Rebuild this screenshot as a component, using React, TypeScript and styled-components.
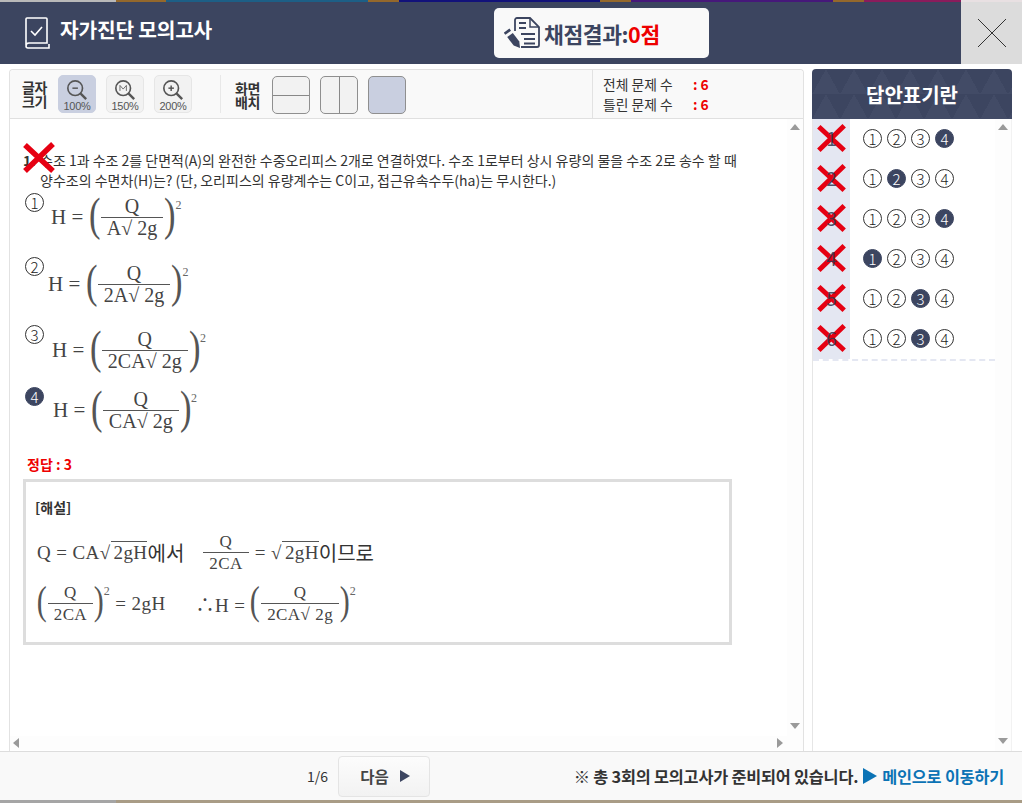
import React from "react"
import styled, { createGlobalStyle } from "styled-components"

const navy = "#3c4560"
const kr = `"Noto Sans CJK KR", "Noto Sans", sans-serif`
const serif = `"Liberation Serif", "Noto Sans CJK KR", serif`

const GlobalStyle = createGlobalStyle`
    html, body {
        margin: 0;
        padding: 0;
        background: #fff;
        font-family: ${kr};
        overflow: hidden;
    }
    * {
        box-sizing: border-box;
    }
`

const Page = styled.div`
    width: 1022px;
    height: 803px;
    display: flex;
    flex-direction: column;
    overflow: hidden;
`

const TopStrip = styled.div`
    height: 2px;
    flex: none;
    background: linear-gradient(
        90deg,
        #b9b9b9 0 116px,
        #94682c 116px 166px,
        #1d5f86 166px 368px,
        #94682c 368px 399px,
        #12127a 399px 600px,
        #94682c 600px 631px,
        #46187a 631px 833px,
        #94682c 833px 864px,
        #8a1c5c 864px 961px,
        #e8e0e2 961px 1022px
    );
`

const Header = styled.header`
    height: 62px;
    flex: none;
    background: ${navy};
    display: flex;
    align-items: stretch;
    padding-left: 24px;
`

const TitleWrap = styled.div`
    width: 470px;
    display: flex;
    align-items: flex-start;
    gap: 10px;
    padding-top: 14px;
`

const Title = styled.h1`
    margin: -1px 0 0;
    color: #fff;
    font-size: 20.3px;
    line-height: 28px;
    font-weight: 700;
    letter-spacing: -0.2px;
`

const ScoreBox = styled.div`
    width: 215px;
    height: 50px;
    margin-top: 6px;
    background: #f9f9f9;
    border-radius: 5px;
    display: flex;
    align-items: center;
    padding-left: 10px;
    gap: 4px;
`

const ScoreLabel = styled.span`
    color: ${navy};
    font-size: 21.5px;
    font-weight: 700;
    letter-spacing: -0.4px;
`

const ScoreValue = styled.span`
    color: #ee0000;
`

const CloseButton = styled.button`
    margin-left: auto;
    width: 61px;
    border: 0;
    padding: 0;
    background: #dcdcdc;
    display: flex;
    align-items: center;
    justify-content: center;
`

const Body = styled.main`
    flex: 1;
    display: flex;
    gap: 8px;
    padding: 5px 10px 0 9px;
    min-height: 0;
`

const LeftPanel = styled.section`
    width: 795px;
    display: flex;
    flex-direction: column;
    border: 1px solid #e2e2e2;
    border-bottom: 0;
    border-radius: 4px 4px 0 0;
`

const Toolbar = styled.div`
    height: 49px;
    flex: none;
    background: #f9f9f9;
    border-bottom: 1px solid #e0e0e0;
    display: flex;
    border-radius: 4px 4px 0 0;
`

const ToolLabel = styled.div`
    font-size: 14px;
    line-height: 14px;
    font-weight: 700;
    color: #333;
    width: 27px;
    text-align: center;
    letter-spacing: -0.3px;
`

const FontGroup = styled.div`
    display: flex;
    align-items: center;
    width: 211px;
    padding-left: 11px;
    border-right: 1px solid #e8e8e8;
    height: 38px;
    margin-top: 5px;
`

const ZoomButtons = styled.div`
    display: flex;
    gap: 10px;
    margin-left: 10px;
`

const ZoomButton = styled.div<{ $active?: boolean }>`
    width: 38px;
    height: 38px;
    border-radius: 5px;
    border: 1px solid ${(p) => (p.$active ? "#c9cfe0" : "#e6e6e6")};
    background: ${(p) => (p.$active ? "#c9cfe0" : "#f2f2f2")};
    display: flex;
    flex-direction: column;
    align-items: center;
    padding-top: 3px;
    font-size: 11px;
    line-height: 11px;
    letter-spacing: -0.3px;
    color: #555;
    font-family: "Liberation Sans", sans-serif;
`

const LayoutGroup = styled.div`
    display: flex;
    align-items: center;
    gap: 10px;
    padding-left: 13px;
    flex: 1;
    margin-top: 1px;

    ${ToolLabel} {
        margin-right: 1px;
    }
`

const LayoutButton = styled.div<{ $active?: boolean; $split?: "h" | "v" }>`
    width: 38px;
    height: 38px;
    border-radius: 5px;
    border: 1px solid #8f8f8f;
    background: ${(p) =>
        p.$active
            ? "#c9cfe0"
            : p.$split === "h"
              ? "linear-gradient(180deg, #f2f2f2 18px, #888 18px 19px, #f2f2f2 19px)"
              : "linear-gradient(90deg, #f2f2f2 18px, #888 18px 19px, #f2f2f2 19px)"};
`

const CountBox = styled.div`
    width: 211px;
    border-left: 1px solid #e2e2e2;
    padding: 4px 0 0 10px;
    font-size: 13.8px;
    line-height: 20px;
    color: #333;
`

const CountRow = styled.div`
    display: flex;
`

const CountName = styled.span`
    width: 90px;
`

const CountValue = styled.span`
    color: #ee0000;
    font-weight: 700;
`

const ContentRow = styled.div`
    flex: 1;
    display: flex;
    min-height: 0;
`

const Content = styled.div`
    flex: 1;
    padding: 31px 0 0 13px;
    min-width: 0;
`

const VScroll = styled.div`
    width: 16px;
    background: #fdfdfd;
    display: flex;
    flex-direction: column;
    justify-content: space-between;
    align-items: center;
    padding: 5px 0 7px;
`

const HScroll = styled.div`
    height: 14px;
    flex: none;
    margin-bottom: 1px;
    background: #fdfdfd;
    display: flex;
    justify-content: space-between;
    align-items: center;
    padding: 0 20px 0 3px;
`

const Arrow = styled.i<{ $dir: "up" | "down" | "left" | "right"; $color?: string; $w?: number; $h?: number }>`
    display: block;
    width: 0;
    height: 0;
    border-style: solid;
    border-color: transparent;
    ${(p) => {
        const c = p.$color || "#9a9a9a"
        const w = p.$w || 6
        const h = p.$h || 5
        if (p.$dir === "up") return `border-width: 0 5px 6px; border-bottom-color: ${c};`
        if (p.$dir === "down") return `border-width: 6px 5px 0; border-top-color: ${c};`
        if (p.$dir === "left") return `border-width: 5px 6px 5px 0; border-right-color: ${c};`
        return `border-width: ${h}px 0 ${h}px ${w}px; border-left-color: ${c};`
    }}
`

const Question = styled.div`
    position: relative;
    font-size: 14px;
    line-height: 20px;
    color: #333;
    padding-left: 17px;
    white-space: nowrap;
`

const QuestionNo = styled.b`
    position: absolute;
    left: 0;
    top: 0;
`

const QuestionMark = styled.span`
    position: absolute;
    left: 0;
    top: -8px;
`

const Options = styled.div`
    display: flex;
    flex-direction: column;
    margin-top: 3px;
`

const Option = styled.div<{ $h: number }>`
    height: ${(p) => p.$h}px;
    display: flex;
    align-items: flex-start;
    padding-left: 1px;
`

const OptionCircle = styled.span<{ $filled?: boolean }>`
    width: 19px;
    height: 19px;
    margin-left: 1px;
    margin-right: 7px;
    flex: none;
    border-radius: 50%;
    border: 1px solid ${(p) => (p.$filled ? navy : "#333")};
    background: ${(p) => (p.$filled ? navy : "transparent")};
    color: ${(p) => (p.$filled ? "#fff" : "#222")};
    font-size: 15px;
    font-weight: 300;
    line-height: 17px;
    text-align: center;
`

const Formula = styled.div<{ $top: number; $left: number }>`
    display: flex;
    align-items: center;
    font-family: ${serif};
    color: #444;
    font-size: 21px;
    white-space: pre;
    margin-top: ${(p) => p.$top}px;
    margin-left: ${(p) => p.$left}px;
`

const Frac = styled.span<{ $size?: number }>`
    display: inline-flex;
    flex-direction: column;
    align-items: center;
    font-size: ${(p) => p.$size || 20}px;
    line-height: 1;
    margin: 0 1px;
`

const Num = styled.span`
    padding: 0 4px 0;
    line-height: 21px;
`

const Den = styled.span`
    border-top: 1.5px solid #555;
    padding: 0 6px;
    line-height: 21px;
    white-space: nowrap;
`

const Sqrt = styled.span<{ $over?: boolean }>`
    ${(p) => (p.$over ? "border-top: 1px solid #555; padding-left: 3px;" : "padding-left: 5px;")}
`

const Sup = styled.sup`
    font-size: 12px;
    line-height: 1;
    align-self: flex-start;
    margin-top: 3px;
    color: #666;
`

const Paren = styled.span<{ $size: number }>`
    font-size: ${(p) => p.$size}px;
    line-height: 1;
    font-weight: 400;
    transform: scaleX(0.75);
    font-family: "Liberation Serif", serif;
    margin: -6px -2px 0;
    color: #555;
`

const Answer = styled.div`
    font-size: 14px;
    line-height: 18px;
    font-weight: 700;
    color: #ee0000;
    margin: 0 0 0 4px;
`

const ExplainBox = styled.div`
    width: 709px;
    height: 166px;
    margin: 6px 0 0 0;
    border: 3px solid #dddddd;
    padding: 16px 0 0 9px;
    color: #333;
`

const ExplainTitle = styled.div`
    font-size: 14px;
    line-height: 18px;
    font-weight: 700;
`

const ExplainLine = styled.div<{ $top: number }>`
    display: flex;
    align-items: center;
    font-family: ${serif};
    font-size: 19px;
    letter-spacing: 0.4px;
    color: #444;
    white-space: pre;
    margin: ${(p) => p.$top}px 0 0 2px;
`

const ExplainKo = styled.span`
    font-family: ${kr};
    font-weight: 400;
    font-size: 20px;
    letter-spacing: 0;
    color: #333;
`

const Spacer = styled.span<{ $w: number }>`
    display: inline-block;
    width: ${(p) => p.$w}px;
`

const RightPanel = styled.aside`
    width: 200px;
    display: flex;
    flex-direction: column;
`

const AnswerHead = styled.div`
    height: 50px;
    flex: none;
    border-radius: 4px 4px 0 0;
    color: #fff;
    font-size: 20px;
    font-weight: 700;
    display: flex;
    align-items: center;
    justify-content: center;
    background-color: ${navy};
    background-image: conic-gradient(from 151deg at 50% 0, #424b66 58deg, transparent 0);
    background-size: 28px 25px;
`

const AnswerBody = styled.div`
    flex: 1;
    display: flex;
    border-left: 1px solid #e6e6e6;
    border-right: 1px solid #f2f2f2;
    min-height: 0;
`

const AnswerList = styled.div`
    flex: 1;
    align-self: flex-start;
    border-bottom: 2px dashed #e4e7f2;
`

const AnswerRow = styled.div`
    height: 40px;
    display: flex;
    align-items: center;
`

const AnswerNo = styled.div`
    width: 37px;
    height: 40px;
    background: #e4e7f2;
    position: relative;
    display: flex;
    align-items: center;
    justify-content: center;
    margin-right: 13px;
`

const RowNumber = styled.span`
    position: relative;
    z-index: 1;
    font-size: 19px;
    line-height: 28px;
    margin-top: -3px;
    color: rgba(50, 56, 80, 0.85);
`

const RowMark = styled.span`
    position: absolute;
    left: 4px;
    top: 5px;
    line-height: 0;
`

const Circles = styled.div`
    display: flex;
    gap: 5px;
    margin-top: -2px;
`

const Circle = styled.span<{ $filled?: boolean }>`
    width: 19px;
    height: 19px;
    border-radius: 50%;
    border: 1px solid ${(p) => (p.$filled ? navy : "#333")};
    background: ${(p) => (p.$filled ? navy : "#fff")};
    color: ${(p) => (p.$filled ? "#fff" : "#222")};
    font-size: 15px;
    font-weight: 300;
    line-height: 17px;
    text-align: center;
`

const Footer = styled.footer`
    height: 49px;
    flex: none;
    border-top: 1px solid #dddddd;
    background: #f9f9f9;
    display: flex;
    align-items: center;
    padding: 0 18px 0 307px;
`

const PageNo = styled.span`
    font-size: 14px;
    color: #333;
    width: 31px;
`

const NextButton = styled.button`
    width: 92px;
    height: 41px;
    border: 1px solid #e4e4e4;
    border-radius: 4px;
    background: linear-gradient(180deg, #fcfcfc, #f2f2f2);
    display: flex;
    align-items: center;
    justify-content: center;
    gap: 11px;
    font-family: ${kr};
    font-size: 15.5px;
    font-weight: 700;
    color: #444;
    padding-right: 4px;
`

const Notice = styled.div`
    margin-left: auto;
    display: flex;
    align-items: center;
    gap: 5px;
    font-size: 16.3px;
    font-weight: 700;
    color: #333;
    letter-spacing: -0.2px;
`

const MainLink = styled.a`
    color: #0b73b5;
    display: flex;
    align-items: center;
    gap: 5px;
`

const BottomStrip = styled.div`
    height: 3px;
    flex: none;
    background: linear-gradient(90deg, #a5a5a5 0 116px, #a99c86 116px);
`

const RedX = ({ size = 32 }: { size?: number }) => (
    <svg width={size} height={size} viewBox="0 0 32 32">
        <path d="M2 3 L30 29 M30 2 L2 29" stroke="#e60012" strokeWidth="5.5" fill="none" />
    </svg>
)

const BookIcon = () => (
    <svg width="26" height="33" viewBox="0 0 26 33" fill="none" stroke="#fff" strokeWidth="1.6">
        <path d="M2 29 V3 a1 1 0 0 1 1 -1 H22 a1 1 0 0 1 1 1 V27 H5 a3 3 0 0 0 -3 3 a2 2 0 0 0 2 2 H25 V28" />
        <path d="M7 15 L11 19 L18 11" />
    </svg>
)

const DocIcon = () => (
    <svg width="36" height="34" viewBox="0 0 36 34">
        <path d="M11 15 V4 a2 2 0 0 1 2 -2 H26 L35 11 V29 a2 2 0 0 1 -2 2 H17" fill="none" stroke={navy} strokeWidth="1.8" />
        <path d="M26 2 V11 H35" fill="none" stroke={navy} strokeWidth="1.5" />
        <path d="M15 7 H22 M15 12 H22 M17 18 H31 M20 23 H31 M20 27.5 H31" stroke={navy} strokeWidth="1.8" />
        <path d="M8.8 16.9 L3.2 21.1 L9.7 29.6 L16 32 L15.3 25.4 Z" fill={navy} />
        <path d="M2.6 14.6 L4.2 16.8" stroke={navy} strokeWidth="7" />
    </svg>
)

const CloseIcon = () => (
    <svg width="30" height="30" viewBox="0 0 30 30">
        <path d="M1 1 L29 29 M29 1 L1 29" stroke="#333" strokeWidth="1" />
    </svg>
)

const Magnifier = ({ sign }: { sign: "minus" | "plus" | "m" }) => (
    <svg width="24" height="24" viewBox="0 0 24 24" fill="none" stroke="#555">
        <circle cx="10" cy="10" r="8" strokeWidth="1.8" />
        <path d="M16 16 L22 22" strokeWidth="2.6" />
        {sign !== "m" && <path d="M7 10 H13" strokeWidth="1.6" />}
        {sign === "plus" && <path d="M10 7 V13" strokeWidth="1.6" />}
        {sign === "m" && <path d="M6.5 13 V7 L10 11 L13.5 7 V13" strokeWidth="0.9" />}
    </svg>
)

const circled = ["1", "2", "3", "4"]

const answers = [4, 2, 4, 1, 3, 3]

const SqrtText = ({ children, over }: { children: React.ReactNode; over?: boolean }) => (
    <>
        √<Sqrt $over={over}>{children}</Sqrt>
    </>
)

const Fraction = ({ den, size }: { den: React.ReactNode; size?: number }) => (
    <Frac $size={size}>
        <Num>Q</Num>
        <Den>{den}</Den>
    </Frac>
)

const Squared = ({ den, size, paren = 46 }: { den: React.ReactNode; size?: number; paren?: number }) => (
    <>
        <Paren $size={paren}>(</Paren>
        <Fraction den={den} size={size} />
        <Paren $size={paren}>)</Paren>
        <Sup>2</Sup>
    </>
)

const SqrtDen = ({ prefix }: { prefix: string }) => (
    <>
        {prefix}
        <SqrtText>2g</SqrtText>
    </>
)

const options = [
    { den: "A", h: 64, top: 3, left: 0 },
    { den: "2A", h: 68, top: 6, left: -3 },
    { den: "2CA", h: 62, top: 4, left: 1 },
    { den: "CA", h: 68, top: 2, left: 2 },
]

const App: React.FC = () => {
    return (
        <Page>
            <GlobalStyle />
            <TopStrip />
            <Header>
                <TitleWrap>
                    <BookIcon />
                    <Title>자가진단 모의고사</Title>
                </TitleWrap>
                <ScoreBox>
                    <DocIcon />
                    <ScoreLabel>
                        채점결과:<ScoreValue>0점</ScoreValue>
                    </ScoreLabel>
                </ScoreBox>
                <CloseButton>
                    <CloseIcon />
                </CloseButton>
            </Header>
            <Body>
                <LeftPanel>
                    <Toolbar>
                        <FontGroup>
                            <ToolLabel>
                                글자
                                <br />
                                크기
                            </ToolLabel>
                            <ZoomButtons>
                                <ZoomButton $active>
                                    <Magnifier sign="minus" />
                                    100%
                                </ZoomButton>
                                <ZoomButton>
                                    <Magnifier sign="m" />
                                    150%
                                </ZoomButton>
                                <ZoomButton>
                                    <Magnifier sign="plus" />
                                    200%
                                </ZoomButton>
                            </ZoomButtons>
                        </FontGroup>
                        <LayoutGroup>
                            <ToolLabel>
                                화면
                                <br />
                                배치
                            </ToolLabel>
                            <LayoutButton $split="h" />
                            <LayoutButton $split="v" />
                            <LayoutButton $active />
                        </LayoutGroup>
                        <CountBox>
                            <CountRow>
                                <CountName>전체 문제 수</CountName>
                                <CountValue>: 6</CountValue>
                            </CountRow>
                            <CountRow>
                                <CountName>틀린 문제 수</CountName>
                                <CountValue>: 6</CountValue>
                            </CountRow>
                        </CountBox>
                    </Toolbar>
                    <ContentRow>
                        <Content>
                            <Question>
                                <QuestionNo>1.</QuestionNo>
                                <QuestionMark>
                                    <RedX />
                                </QuestionMark>
                                수조 1과 수조 2를 단면적(A)의 완전한 수중오리피스 2개로 연결하였다. 수조 1로부터 상시 유량의 물을 수조 2로 송수 할 때
                                <br />
                                양수조의 수면차(H)는? (단, 오리피스의 유량계수는 C이고, 접근유속수두(ha)는 무시한다.)
                            </Question>
                            <Options>
                                {options.map((o, i) => (
                                    <Option key={o.den} $h={o.h}>
                                        <OptionCircle $filled={i === 3}>{circled[i]}</OptionCircle>
                                        <Formula $top={o.top} $left={o.left}>
                                            H = <Squared den={<SqrtDen prefix={o.den} />} />
                                        </Formula>
                                    </Option>
                                ))}
                            </Options>
                            <Answer>정답 : 3</Answer>
                            <ExplainBox>
                                <ExplainTitle>[해설]</ExplainTitle>
                                <ExplainLine $top={15}>
                                    Q = CA<SqrtText over>2gH</SqrtText>
                                    <ExplainKo>에서</ExplainKo>
                                    <Spacer $w={18} />
                                    <Fraction den="2CA" size={17} /> = <SqrtText over>2gH</SqrtText>
                                    <ExplainKo>이므로</ExplainKo>
                                </ExplainLine>
                                <ExplainLine $top={8}>
                                    <Squared den="2CA" size={17} paren={40} /> = 2gH
                                    <Spacer $w={30} />
                                    ∴H = <Squared den={<SqrtDen prefix="2CA" />} size={17} paren={40} />
                                </ExplainLine>
                            </ExplainBox>
                        </Content>
                        <VScroll>
                            <Arrow $dir="up" />
                            <Arrow $dir="down" />
                        </VScroll>
                    </ContentRow>
                    <HScroll>
                        <Arrow $dir="left" />
                        <Arrow $dir="right" />
                    </HScroll>
                </LeftPanel>
                <RightPanel>
                    <AnswerHead>답안표기란</AnswerHead>
                    <AnswerBody>
                        <AnswerList>
                            {answers.map((a, i) => (
                                <AnswerRow key={i}>
                                    <AnswerNo>
                                        <RowMark>
                                            <RedX size={29} />
                                        </RowMark>
                                        <RowNumber>{i + 1}</RowNumber>
                                    </AnswerNo>
                                    <Circles>
                                        {circled.map((c, j) => (
                                            <Circle key={c} $filled={a === j + 1}>
                                                {c}
                                            </Circle>
                                        ))}
                                    </Circles>
                                </AnswerRow>
                            ))}
                        </AnswerList>
                        <VScroll>
                            <Arrow $dir="up" />
                            <Arrow $dir="down" />
                        </VScroll>
                    </AnswerBody>
                </RightPanel>
            </Body>
            <Footer>
                <PageNo>1/6</PageNo>
                <NextButton>
                    다음 <Arrow $dir="right" $color="#3c4560" $w={10} $h={6} />
                </NextButton>
                <Notice>
                    ※ 총 3회의 모의고사가 준비되어 있습니다.
                    <MainLink>
                        <Arrow $dir="right" $color="#0b73b5" $w={14} $h={8} />
                        메인으로 이동하기
                    </MainLink>
                </Notice>
            </Footer>
            <BottomStrip />
        </Page>
    )
}

export default App
